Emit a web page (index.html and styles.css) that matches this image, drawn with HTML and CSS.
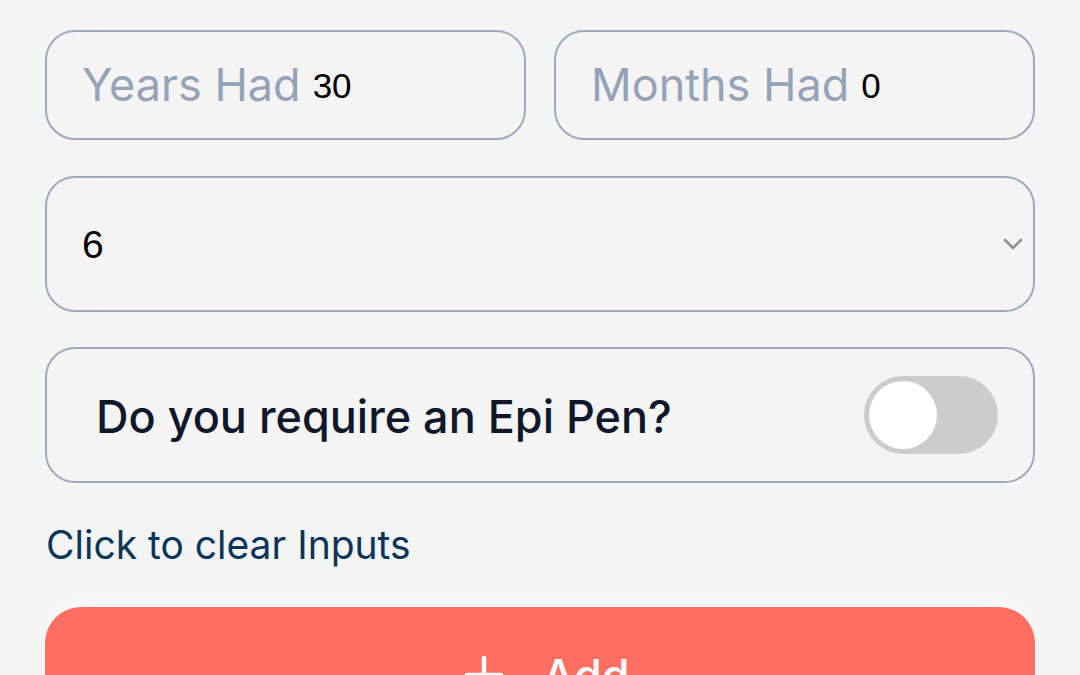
FILE: index.html
```html
<!DOCTYPE html>
<html lang="en">
<head>
<meta charset="utf-8">
<title>Vaccination entry</title>
<link rel="stylesheet" href="styles.css">
</head>
<body>
<form class="form">
  <div class="row">
    <label class="field">
      <span class="field-label">Years Had</span>
      <span class="field-value">30</span>
    </label>
    <label class="field">
      <span class="field-label">Months Had</span>
      <span class="field-value">0</span>
    </label>
  </div>

  <div class="select">
    <span class="select-value">6</span>
    <svg class="chevron" width="22" height="14" viewBox="0 0 22 14" aria-hidden="true">
      <path d="M3 3 L11 11 L19 3" fill="none" stroke="#8e8e8e" stroke-width="2.6" stroke-linecap="round" stroke-linejoin="round"/>
    </svg>
  </div>

  <div class="toggle-box">
    <span class="toggle-label">Do you require an Epi Pen?</span>
    <span class="switch"><span class="knob"></span></span>
  </div>

  <a class="clear-link">Click to clear Inputs</a>

  <button type="button" class="add-btn">
    <svg class="plus" width="40" height="40" viewBox="0 0 40 40" aria-hidden="true">
      <path d="M20 3 V37 M3 20 H37" stroke="#ffffff" stroke-width="4.5" stroke-linecap="round"/>
    </svg>
    <span>Add</span>
  </button>
</form>
</body>
</html>
```

FILE: styles.css
```css
html, body {
  margin: 0;
  padding: 0;
  background: #f4f4f4;
  width: 1080px;
  height: 675px;
  overflow: hidden;
}

.form {
  display: flex;
  flex-direction: column;
  width: 990px;
  margin-left: 45px;
  padding-top: 30px;
  font-family: Inter, "Noto Sans", sans-serif;
}

.row {
  display: flex;
  gap: 28px;
}

.field {
  flex: 1;
  height: 110px;
  box-sizing: border-box;
  border: 2px solid #9eaabb;
  border-radius: 30px;
  display: flex;
  align-items: center;
  padding: 0 0 0 35px;
  gap: 12px;
}

.field-label {
  font-size: 45px;
  color: #94a3b8;
  line-height: 1;
  padding-bottom: 2px;
}

.field-value {
  font-family: "Liberation Sans", Arial, sans-serif;
  font-size: 35px;
  color: #000;
  line-height: 1;
  padding-bottom: 0;
}

.select {
  margin-top: 36px;
  height: 136px;
  box-sizing: border-box;
  border: 2px solid #9eaabb;
  border-radius: 30px;
  display: flex;
  align-items: center;
  justify-content: space-between;
  padding: 0 9px 0 35px;
}

.select-value {
  font-family: "Liberation Sans", Arial, sans-serif;
  font-size: 39px;
  color: #000;
  line-height: 1;
}

.toggle-box {
  margin-top: 35px;
  height: 136px;
  box-sizing: border-box;
  border: 2px solid #9eaabb;
  border-radius: 30px;
  display: flex;
  align-items: center;
  justify-content: space-between;
  padding: 0 35px 0 49px;
}

.toggle-label {
  font-size: 45px;
  font-weight: 500;
  color: #0f172a;
  line-height: 1;
  padding-top: 2px;
}

.switch {
  width: 134px;
  height: 78px;
  border-radius: 39px;
  background: #cccccc;
  display: flex;
  align-items: center;
  padding: 0 5px;
  box-sizing: border-box;
}

.knob {
  width: 68px;
  height: 68px;
  border-radius: 50%;
  background: #ffffff;
}

.clear-link {
  margin-top: 38px;
  font-size: 39px;
  color: #0b3558;
  line-height: 48px;
  align-self: flex-start;
  margin-left: 1px;
}

.add-btn {
  margin-top: 38px;
  height: 136px;
  border: none;
  border-radius: 36px;
  background: #ff6f61;
  color: #ffffff;
  font-family: Inter, "Noto Sans", sans-serif;
  font-size: 45px;
  font-weight: 500;
  display: flex;
  align-items: center;
  justify-content: center;
  gap: 38px;
  box-shadow: 0 -8px 24px rgba(255, 255, 255, 0.6);
  padding: 0 0 0 14px;
}
```
